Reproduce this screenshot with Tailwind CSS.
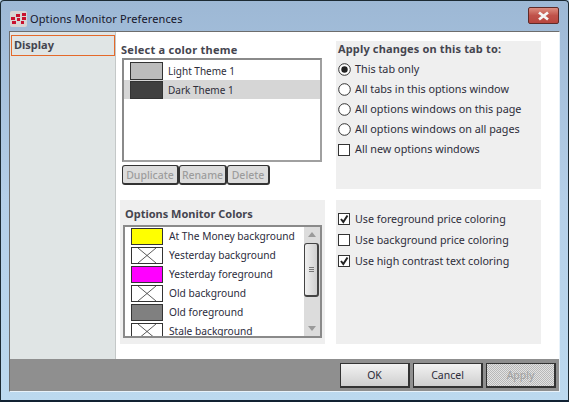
<!DOCTYPE html>
<html><head><script src="https://cdn.jsdelivr.net/npm/@tailwindcss/browser@4"></script></head>
<body class="m-0 bg-[#b9d4ea]">
<div class="w-[569px] h-[402px] flex flex-col overflow-hidden border border-[#1c2a33] border-b-2 border-b-[#123] rounded-t-[4px] bg-gradient-to-b from-[#9db8d5] via-[#b5cfe8] to-[#bcd9ef] text-[#2d2d3a] font-['Noto_Sans','Liberation_Sans',sans-serif] text-[11px] leading-[14px] whitespace-nowrap">
  <div class="h-[30px] shrink-0 flex items-center pl-[9px] pr-[9px] pt-[5px]">
    <svg width="17" height="16" viewBox="0 0 17 16" class="mr-[3px]"><rect width="17" height="16" rx="2" fill="#d8d4d4"/><g fill="#c8102e"><rect x="1" y="6" width="4" height="3"/><rect x="2" y="10" width="4" height="3"/><rect x="6" y="3" width="4" height="3"/><rect x="7" y="7" width="3" height="3"/><rect x="12" y="2" width="4" height="3"/><rect x="12" y="6" width="4" height="3"/><rect x="11" y="10" width="3" height="3"/></g></svg>
    <span class="text-[11px] text-[#15152a] tracking-[0.12px]">Options Monitor Preferences</span>
    <div class="ml-auto mb-[6px] w-[31px] h-[17px] rounded-[2px] border border-[#5e2a28] bg-gradient-to-b from-[#dc8d80] via-[#c0524a] to-[#b8463f] flex items-center justify-center">
      <svg width="13" height="10" viewBox="0 0 13 10"><path d="M2 1.5 L11 8.5 M11 1.5 L2 8.5" stroke="#f5f5f5" stroke-width="2.8"/></svg>
    </div>
  </div>
  <div class="flex flex-col flex-1 ml-[8px] mr-[8px] mb-[8px] border border-[#6d6d6d] border-r-[#e8f2fa] border-b-[#e8f2fa] bg-white">
    <div class="flex flex-1 min-h-0">
      <div class="w-[106px] shrink-0 bg-[#e0e5e5] border-r border-[#c4c8c8] pt-[3px] px-[1px]">
        <div class="h-[21px] w-[104px] border border-[#e4692a] px-[2px] pt-[2px] font-bold text-[#45454f]">Display</div>
      </div>
      <div class="flex pt-[9px] pl-[4px] gap-[11px]">
        <div class="w-[205px] flex flex-col gap-[11px]">
          <div class="h-[148px] pt-[2px]">
            <div class="pl-[1px] font-bold text-[#45454f] tracking-[0.25px]">Select a color theme</div>
            <div class="ml-[2px] mt-[1px] w-[200px] h-[104px] border-2 border-[#8a8a8a] border-b-[#a0a0a0] border-r-[#a0a0a0] py-[1px] text-[10px]">
              <div class="h-[19px] flex items-center pl-[6px]">
                <span class="w-[33px] h-[18px] bg-[#bcbcbc] border border-[#333] mr-[5px]"></span>Light Theme 1
              </div>
              <div class="h-[19px] flex items-center pl-[6px] bg-[#d6d6d6]">
                <span class="w-[33px] h-[18px] bg-[#404040] border border-[#333] mr-[5px]"></span>Dark Theme 1
              </div>
            </div>
            <div class="ml-[2px] mt-[3px] flex text-[#9c9c9c] font-medium text-[10.5px]">
              <div class="w-[57px] h-[20px] flex items-center justify-center rounded-[3px] border border-[#333] border-b-2 border-r-2 bg-[#dcdcdc]">Duplicate</div>
              <div class="w-[48px] h-[20px] flex items-center justify-center rounded-[3px] border border-[#333] border-b-2 border-r-2 bg-[#dcdcdc]">Rename</div>
              <div class="w-[43px] h-[20px] flex items-center justify-center rounded-[3px] border border-[#333] border-b-2 border-r-2 bg-[#dcdcdc]">Delete</div>
            </div>
          </div>
          <div class="h-[144px] bg-[#efefef] pt-[7px] px-[3px]">
            <div class="pl-[2px] font-bold text-[#45454f]">Options Monitor Colors</div>
            <div class="mt-[4px] w-[199px] h-[113px] border-2 border-[#8a8a8a] bg-white flex overflow-hidden text-[10.2px]">
              <div class="flex-1 flex flex-col gap-[3px] pt-[1px] pl-[6px] overflow-hidden">
                <div class="h-[16px] shrink-0 flex items-center text-[#2c2c3c]"><span class="w-[32px] h-[17px] shrink-0 bg-[#ffff00] border border-[#333] mr-[6px]"></span>At The Money background</div>
                <div class="h-[16px] shrink-0 flex items-center text-[#2c2c3c]"><svg width="32" height="17" class="mr-[6px] shrink-0"><rect x=".5" y=".5" width="31" height="16" fill="#fff" stroke="#333"/><path d="M7 1 L25 16 M25 1 L7 16" stroke="#333" stroke-width=".8"/></svg>Yesterday background</div>
                <div class="h-[16px] shrink-0 flex items-center text-[#2c2c3c]"><span class="w-[32px] h-[17px] shrink-0 bg-[#ff00ff] border border-[#333] mr-[6px]"></span>Yesterday foreground</div>
                <div class="h-[16px] shrink-0 flex items-center text-[#2c2c3c]"><svg width="32" height="17" class="mr-[6px] shrink-0"><rect x=".5" y=".5" width="31" height="16" fill="#fff" stroke="#333"/><path d="M7 1 L25 16 M25 1 L7 16" stroke="#333" stroke-width=".8"/></svg>Old background</div>
                <div class="h-[16px] shrink-0 flex items-center text-[#2c2c3c]"><span class="w-[32px] h-[17px] shrink-0 bg-[#808080] border border-[#333] mr-[6px]"></span>Old foreground</div>
                <div class="h-[16px] shrink-0 flex items-center text-[#2c2c3c]"><svg width="32" height="17" class="mr-[6px] shrink-0"><rect x=".5" y=".5" width="31" height="16" fill="#fff" stroke="#333"/><path d="M7 1 L25 16 M25 1 L7 16" stroke="#333" stroke-width=".8"/></svg>Stale background</div>
              </div>
              <div class="w-[16px] shrink-0 bg-[#dcdcdc] flex flex-col items-center justify-between py-[5px] relative">
                <svg width="8" height="5"><path d="M0 5 L4 0 L8 5Z" fill="#9a9a9a"/></svg>
                <div class="absolute left-0 top-[16px] w-[15px] h-[54px] rounded-[3px] border-2 border-[#444] border-t border-l bg-gradient-to-r from-[#f0f0f0] to-[#d0d0d0] flex flex-col items-center justify-center gap-[1px]">
                  <span class="w-[5px] h-px bg-[#777]"></span><span class="w-[5px] h-px bg-[#777]"></span><span class="w-[5px] h-px bg-[#777]"></span>
                </div>
                <svg width="8" height="5"><path d="M0 0 L4 5 L8 0Z" fill="#9a9a9a"/></svg>
              </div>
            </div>
          </div>
        </div>
        <div class="w-[205px] flex flex-col gap-[11px]">
          <div class="h-[148px] bg-[#efefef] pt-[1px] px-[2px]">
            <div class="font-bold text-[#45454f] h-[14px] tracking-[0.15px]">Apply changes on this tab to:</div>
            <div class="mt-[3px] flex flex-col text-[10.8px]">
              <div class="h-[20px] flex items-center gap-[4px]"><svg width="13" height="13"><circle cx="6.5" cy="6.5" r="5.8" fill="#fff" stroke="#333"/><circle cx="6.5" cy="6.5" r="3.2" fill="#222"/></svg>This tab only</div>
              <div class="h-[20px] flex items-center gap-[4px]"><svg width="13" height="13"><circle cx="6.5" cy="6.5" r="5.8" fill="#fff" stroke="#333"/></svg>All tabs in this options window</div>
              <div class="h-[20px] flex items-center gap-[4px]"><svg width="13" height="13"><circle cx="6.5" cy="6.5" r="5.8" fill="#fff" stroke="#333"/></svg>All options windows on this page</div>
              <div class="h-[20px] flex items-center gap-[4px]"><svg width="13" height="13"><circle cx="6.5" cy="6.5" r="5.8" fill="#fff" stroke="#333"/></svg>All options windows on all pages</div>
              <div class="h-[20px] flex items-center gap-[4px]"><svg width="13" height="13"><rect x=".5" y="1.5" width="11" height="11" fill="#fff" stroke="#333"/></svg>All new options windows</div>
            </div>
          </div>
          <div class="h-[144px] bg-[#efefef] pt-[12px] px-[2px] text-[10.7px]">
            <div class="flex flex-col gap-[7px]">
              <div class="h-[14px] flex items-center gap-[4px]"><svg width="13" height="13"><rect x=".5" y=".5" width="11" height="11" fill="#fff" stroke="#333"/><path d="M3 6 L5.3 9 L9.5 2.5" fill="none" stroke="#222" stroke-width="2"/></svg>Use foreground price coloring</div>
              <div class="h-[14px] flex items-center gap-[4px]"><svg width="13" height="13"><rect x=".5" y=".5" width="11" height="11" fill="#fff" stroke="#333"/></svg>Use background price coloring</div>
              <div class="h-[14px] flex items-center gap-[4px]"><svg width="13" height="13"><rect x=".5" y=".5" width="11" height="11" fill="#fff" stroke="#333"/><path d="M3 6 L5.3 9 L9.5 2.5" fill="none" stroke="#222" stroke-width="2"/></svg>Use high contrast text coloring</div>
            </div>
          </div>
        </div>
      </div>
    </div>
    <div class="h-[32px] shrink-0 bg-[#8f8f8f] flex items-center justify-end gap-[3px] pr-[3px] pt-[1px] text-[10.5px]">
      <div class="w-[70px] h-[25px] border-2 border-[#333] border-t border-l bg-gradient-to-b from-[#f2f2f2] to-[#cfcfcf] flex items-center justify-center">OK</div>
      <div class="w-[70px] h-[25px] border-2 border-[#333] border-t border-l bg-gradient-to-b from-[#f2f2f2] to-[#cfcfcf] flex items-center justify-center">Cancel</div>
      <div class="w-[70px] h-[25px] border-2 border-[#333] border-t border-l bg-[repeating-conic-gradient(#b8b8b8_0%_25%,#e2e2e2_0%_50%)] bg-[length:2px_2px] text-[#a0a0a0] flex items-center justify-center">Apply</div>
    </div>
  </div>
</div>
</body></html>
